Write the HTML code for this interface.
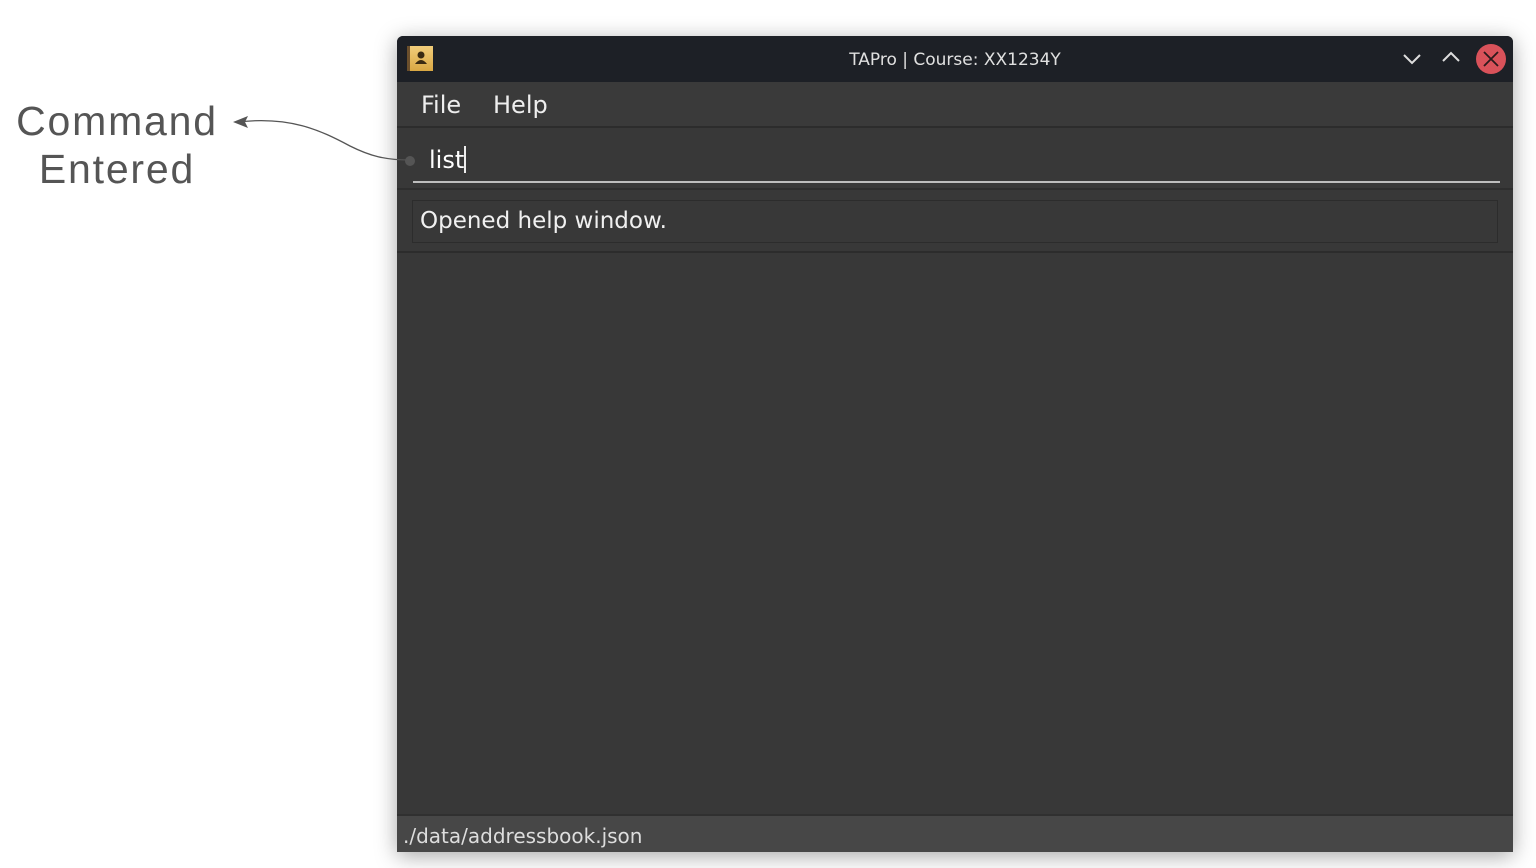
<!DOCTYPE html>
<html><head><style>
body{margin:0;width:1536px;height:868px;background:#fff;position:relative;overflow:hidden;font-family:"DejaVu Sans","Liberation Sans",sans-serif}
.win{position:absolute;left:397px;top:36px;width:1116px;height:816px;background:#383838;border-radius:6px 6px 0 0;box-shadow:0 4px 22px rgba(0,0,0,.35);overflow:hidden}
.tb{position:absolute;left:0;top:0;right:0;height:46px;background:#1d2026;color:#dde;font-size:17px}
.abs{position:absolute}
.ann{position:absolute;color:#555;font-family:"Liberation Sans",sans-serif;font-size:41px;text-align:center;line-height:48px;font-weight:300;letter-spacing:1.8px}
</style></head><body>
<div class="ann" style="left:0px;top:97px;width:234px">Command<br>Entered</div>
<div class="win">
 <div class="tb">
  <div class="abs" style="left:10px;top:10px;width:26px;height:25px;background:linear-gradient(#f1cd7a,#d9a743);border-left:3px solid #6b4f2c;box-sizing:border-box"><svg width="23" height="25"><circle cx="11" cy="9" r="3.5" fill="#3a2a12"/><path d="M5 18 Q11 10 17 18Z" fill="#3a2a12"/></svg></div>
  <div class="abs" style="left:0;right:0;top:14px;text-align:center;font-size:17px;color:#e0e0e0">TAPro | Course: XX1234Y</div>
  <svg class="abs" style="left:1005px;top:15px" width="20" height="16"><path d="M2 4 L10 12 L18 4" stroke="#ddd" stroke-width="2" fill="none"/></svg>
  <svg class="abs" style="left:1044px;top:13px" width="20" height="16"><path d="M2 12 L10 4 L18 12" stroke="#ddd" stroke-width="2" fill="none"/></svg>
  <svg class="abs" style="left:1078px;top:7px" width="32" height="32"><circle cx="16" cy="16" r="15" fill="#d9525a"/><path d="M9 9 L23 23 M23 9 L9 23" stroke="#2a1a1c" stroke-width="1.8"/></svg>
 </div>
 <div class="abs" style="top:46px;left:0;right:0;height:44px;background:#3a3a3a;border-bottom:2px solid #2c2c2c"></div>
 <div class="abs" style="left:24px;top:55px;font-size:24px;color:#eee">File</div>
 <div class="abs" style="left:96px;top:55px;font-size:24px;color:#eee">Help</div>
 <div class="abs" style="left:32px;top:110px;font-size:24px;color:#fff">list<span style="display:inline-block;width:2px;height:27px;background:#eee;vertical-align:-5px"></span></div>
 <div class="abs" style="left:16px;top:145px;width:1087px;height:2px;background:#bdbdbd"></div>
 <div class="abs" style="left:0;right:0;top:152px;height:2px;background:#2e2e2e"></div>
 <div class="abs" style="left:15px;top:164px;width:1086px;height:43px;border:1px solid #2c2c2c;background:#383838;box-sizing:border-box"></div>
 <div class="abs" style="left:23px;top:172px;font-size:23px;color:#f0f0f0">Opened help window.</div>
 <div class="abs" style="left:0;right:0;top:215px;height:2px;background:#2c2c2c"></div>
 <div class="abs" style="left:0;right:0;top:778px;height:38px;background:#474747;border-top:2px solid #303030"></div>
 <div class="abs" style="left:6px;top:788px;font-size:20px;color:#ddd">./data/addressbook.json</div>
</div>
<svg class="abs" style="left:230px;top:110px" width="190" height="60"><path d="M8 12 C60 6 90 20 120 36 C140 46 155 50 180 50" stroke="#555" stroke-width="1.3" fill="none"/><path d="M3 12 L18 6 L15 12 L18 18Z" fill="#555"/><circle cx="180" cy="51" r="5" fill="#555"/></svg>
</body></html>
